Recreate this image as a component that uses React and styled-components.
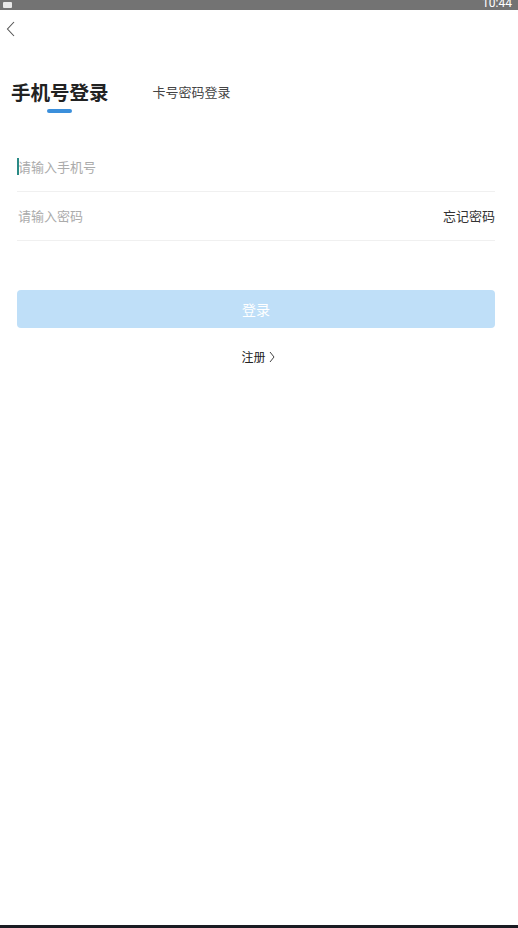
import styled, { createGlobalStyle } from "styled-components";

const GlobalStyle = createGlobalStyle`
  html, body {
    margin: 0;
    padding: 0;
    background: #ffffff;
  }
  body {
    font-family: "Noto Sans CJK SC", "Noto Sans", sans-serif;
  }
`;

const Page = styled.div`
  display: flex;
  flex-direction: column;
  height: 928px;
  overflow: hidden;
`;

const StatusBar = styled.div`
  height: 10px;
  background: #737373;
  display: flex;
  justify-content: space-between;
  align-items: flex-end;
  padding: 0 6px 0 3px;
  overflow: hidden;
`;

const StatusIcon = styled.div`
  width: 9px;
  height: 6px;
  background: #e8e8e8;
  border-radius: 1px;
  margin-bottom: 2px;
`;

const Clock = styled.span`
  color: #ffffff;
  font-family: "Roboto", sans-serif;
  font-size: 12px;
  line-height: 12px;
  margin-bottom: 1px;
`;

const Body = styled.div`
  flex: 1;
  display: flex;
  flex-direction: column;
`;

const BackButton = styled.div`
  height: 38px;
  padding-left: 6px;
  display: flex;
  align-items: center;
`;

const Tabs = styled.div`
  display: flex;
  align-items: flex-start;
  gap: 44px;
  padding: 32px 0 0 11px;
  height: 84px;
  box-sizing: border-box;
`;

const Tab = styled.div`
  display: flex;
  flex-direction: column;
  align-items: center;
  color: ${(props) => (props.active ? "#222222" : "#444444")};
  font-size: ${(props) => (props.active ? "19.5px" : "13px")};
  font-weight: ${(props) => (props.active ? "700" : "400")};
  line-height: 24px;
`;

const TabBar = styled.div`
  width: 25px;
  height: 4px;
  border-radius: 2px;
  background: ${(props) => (props.active ? "#3b8fdb" : "transparent")};
  margin-top: 5px;
`;

const Form = styled.div`
  padding: 0 23px 0 17px;
  display: flex;
  flex-direction: column;
  margin-top: 11px;
`;

const Field = styled.div`
  height: 46px;
  padding: 0 0 2px 1px;
  border-bottom: 1px solid #f0f0f0;
  display: flex;
  align-items: center;
  justify-content: space-between;
  font-size: 13px;
`;

const Placeholder = styled.span`
  position: relative;
  color: #ababab;
`;

const Caret = styled.span`
  position: absolute;
  left: -1px;
  top: 1px;
  width: 1.5px;
  height: 17px;
  background: #2a8a86;
`;

const FieldAction = styled.span`
  color: #333333;
`;

const LoginButton = styled.div`
  margin-top: 49px;
  height: 38px;
  border-radius: 4px;
  background: #bfdff8;
  color: #ffffff;
  font-size: 14px;
  display: flex;
  align-items: center;
  justify-content: center;
`;

const Register = styled.div`
  margin-top: 20px;
  display: flex;
  justify-content: center;
  align-items: center;
  gap: 3px;
  font-size: 12px;
  color: #222222;
  padding-left: 4px;
`;

const HomeBar = styled.div`
  height: 3px;
  background: #1a1b22;
`;

const BackIcon = () => (
  <svg width="10" height="16" viewBox="0 0 10 16">
    <polyline
      points="8,1 1.5,8 8,15"
      fill="none"
      stroke="#555"
      strokeWidth="1.1"
    />
  </svg>
);

const SmallChevron = () => (
  <svg width="6" height="12" viewBox="0 0 6 12">
    <polyline
      points="1,1 5,6 1,11"
      fill="none"
      stroke="#444"
      strokeWidth="1"
    />
  </svg>
);

const App = () => {
  return (
    <Page>
      <GlobalStyle />
      <StatusBar>
        <StatusIcon />
        <Clock>10:44</Clock>
      </StatusBar>
      <Body>
        <BackButton>
          <BackIcon />
        </BackButton>
        <Tabs>
          <Tab active>
            手机号登录
            <TabBar active />
          </Tab>
          <Tab>卡号密码登录</Tab>
        </Tabs>
        <Form>
          <Field>
            <Placeholder>
              <Caret />
              请输入手机号
            </Placeholder>
          </Field>
          <Field>
            <Placeholder>请输入密码</Placeholder>
            <FieldAction>忘记密码</FieldAction>
          </Field>
          <LoginButton>登录</LoginButton>
          <Register>
            注册
            <SmallChevron />
          </Register>
        </Form>
      </Body>
      <HomeBar />
    </Page>
  );
};

export default App;
